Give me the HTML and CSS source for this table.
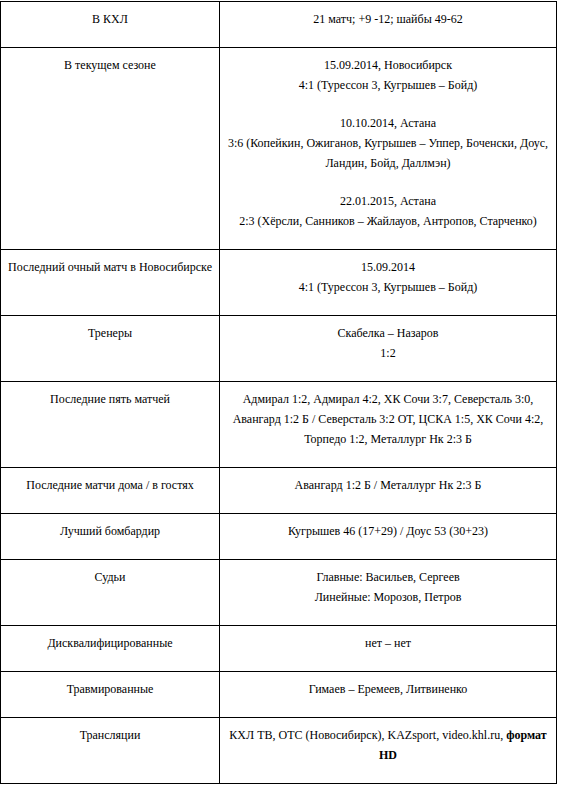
FILE: index.html
```html
<!DOCTYPE html>
<html lang="ru">
<head>
<meta charset="utf-8">
<title>Превью</title>
<link rel="stylesheet" href="styles.css">
</head>
<body>
<table class="info">
  <colgroup><col class="c-label"><col class="c-value"></colgroup>
  <tr>
    <td><p>В КХЛ</p></td>
    <td><p>21 матч; +9 -12; шайбы 49-62</p></td>
  </tr>
  <tr>
    <td><p>В текущем сезоне</p></td>
    <td>
      <p>15.09.2014, Новосибирск<br>4:1 (Турессон 3, Кугрышев – Бойд)</p>
      <p>10.10.2014, Астана<br>3:6 (Копейкин, Ожиганов, Кугрышев – Уппер, Боченски, Доус, Ландин, Бойд, Даллмэн)</p>
      <p>22.01.2015, Астана<br>2:3 (Хёрсли, Санников – Жайлауов, Антропов, Старченко)</p>
    </td>
  </tr>
  <tr>
    <td><p>Последний очный матч в Новосибирске</p></td>
    <td><p>15.09.2014<br>4:1 (Турессон 3, Кугрышев – Бойд)</p></td>
  </tr>
  <tr>
    <td><p>Тренеры</p></td>
    <td><p>Скабелка – Назаров<br>1:2</p></td>
  </tr>
  <tr>
    <td><p>Последние пять матчей</p></td>
    <td><p>Адмирал 1:2, Адмирал 4:2, ХК Сочи 3:7, Северсталь 3:0, Авангард 1:2 Б / Северсталь 3:2 ОТ, ЦСКА 1:5, ХК Сочи 4:2, Торпедо 1:2, Металлург Нк 2:3 Б</p></td>
  </tr>
  <tr>
    <td><p>Последние матчи дома / в гостях</p></td>
    <td><p>Авангард 1:2 Б / Металлург Нк 2:3 Б</p></td>
  </tr>
  <tr>
    <td><p>Лучший бомбардир</p></td>
    <td><p>Кугрышев 46 (17+29) / Доус 53 (30+23)</p></td>
  </tr>
  <tr>
    <td><p>Судьи</p></td>
    <td><p>Главные: Васильев, Сергеев<br>Линейные: Морозов, Петров</p></td>
  </tr>
  <tr>
    <td><p>Дисквалифицированные</p></td>
    <td><p>нет – нет</p></td>
  </tr>
  <tr>
    <td><p>Травмированные</p></td>
    <td><p>Гимаев – Еремеев, Литвиненко</p></td>
  </tr>
  <tr>
    <td><p>Трансляции</p></td>
    <td><p>КХЛ ТВ, ОТС (Новосибирск), KAZsport, video.khl.ru, <strong>формат</strong><br><strong>HD</strong></p></td>
  </tr>
</table>
</body>
</html>
```
FILE: styles.css
```css
html, body {
  margin: 0;
  padding: 0;
  background: #fff;
}
body {
  padding-top: 1px;
  font-family: "Times New Roman", "Liberation Serif", "DejaVu Serif", serif;
  font-size: 12px;
  color: #000;
}
.info {
  border-collapse: collapse;
  width: 557px;
  table-layout: fixed;
  font-family: "Times New Roman", "Liberation Serif", "DejaVu Serif", serif;
}
.c-label { width: 219px; }
.info td {
  border: 1px solid #000;
  vertical-align: top;
  text-align: center;
  padding: 7px 5px 0;
  font-family: "Times New Roman", "Liberation Serif", "DejaVu Serif", serif;
}
.info p {
  margin: 0 0 18px;
  line-height: 20px;
}
.info strong { font-weight: bold; }
```
